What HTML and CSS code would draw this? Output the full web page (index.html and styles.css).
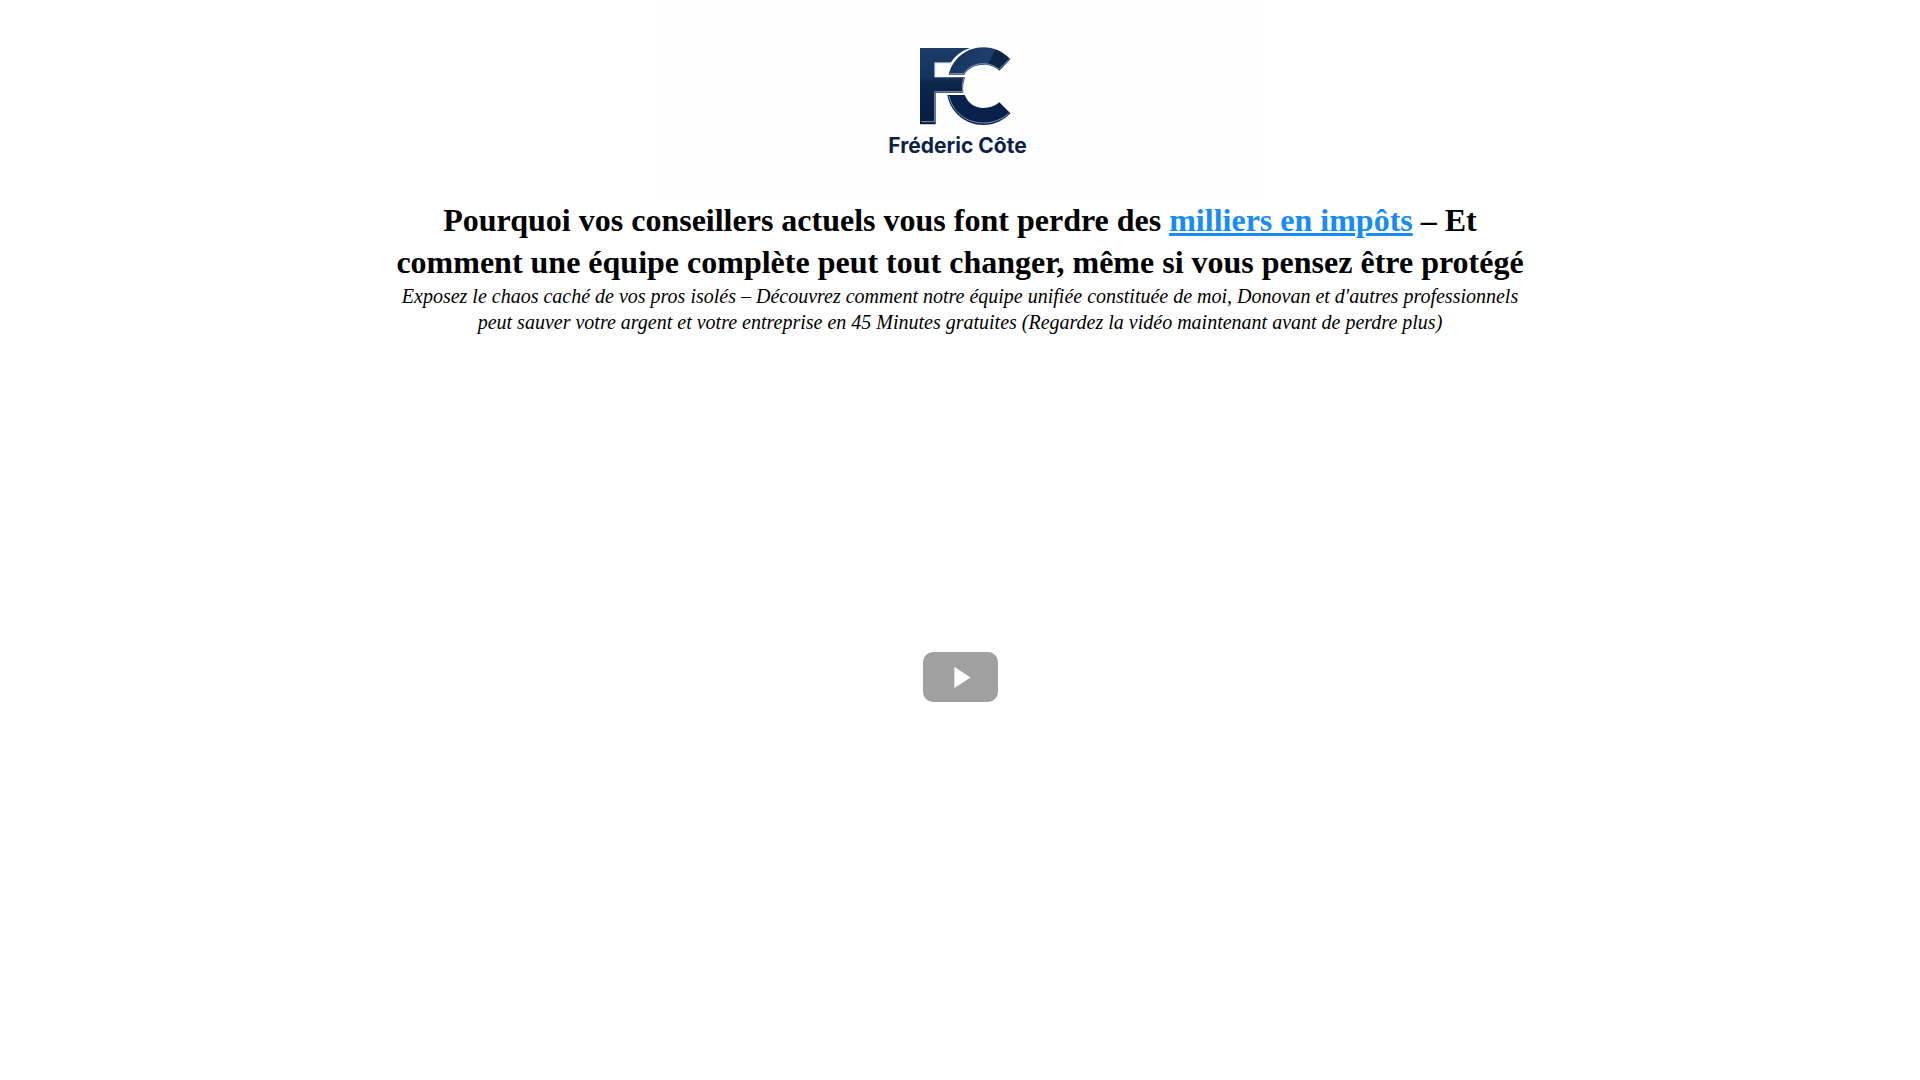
FILE: index.html
```html
<!DOCTYPE html>
<html lang="fr">
<head>
    <meta charset="UTF-8">
    <meta name="viewport" content="width=device-width, initial-scale=1.0">
    <title>Fréderic Côte</title>
    <link rel="stylesheet" href="styles.css">
</head>
<body>
    <header class="logo">
        <svg class="logo-mark" viewBox="147 48 276 240" aria-hidden="true">
            <defs>
                <linearGradient id="navy" x1="0" y1="0" x2="0" y2="1">
                    <stop offset="0" stop-color="#1b3b68"/>
                    <stop offset="0.38" stop-color="#163460"/>
                    <stop offset="0.46" stop-color="#0b2549"/>
                    <stop offset="1" stop-color="#071d40"/>
                </linearGradient>
                <linearGradient id="navyTop" gradientUnits="userSpaceOnUse" x1="240" y1="60" x2="400" y2="140">
                    <stop offset="0" stop-color="#14315b"/>
                    <stop offset="0.66" stop-color="#1f406f"/>
                    <stop offset="0.69" stop-color="#0c2448"/>
                    <stop offset="1" stop-color="#0c2448"/>
                </linearGradient>
            </defs>
            <!-- F -->
            <path fill="url(#navy)" d="M150 54H300Q262 67 243 97H193V142H285Q277 164 280 188H197V283H150Z"/>
            <path class="edge" d="M243 98H194V141M281 143Q274 164 278 185H194V275H154"/>
            <!-- C -->
            <path fill="url(#navyTop)" d="M236 134C248 86 289 52 340 52C371 52 400 65 421 88L388 122C375 109 358 104 340 104C315 104 292 116 283 134Z"/>
            <path fill="#08204a" d="M232 195H284C294 219 314 234 340 234C359 234 375 229 388 217L421 250C400 273 371 285 340 285C287 285 241 247 232 195Z"/>
            <path class="edge" d="M240 131H281C292 112 315 101 340 101C358 101 374 107 387 118L418 87"/>
            <path class="edge" d="M237 198C248 247 290 279 340 279C371 279 396 268 416 250"/>
        </svg>
        <span class="logo-name">Fréderic Côte</span>
    </header>

    <main class="content">
        <h1>Pourquoi vos conseillers actuels vous font perdre des <a href="#video">milliers en impôts</a> – Et comment une équipe complète peut tout changer, même si vous pensez être protégé</h1>
        <p class="subtitle">Exposez le chaos caché de vos pros isolés – Découvrez comment notre équipe unifiée constituée de moi, Donovan et d'autres professionnels peut sauver votre argent et votre entreprise en 45 Minutes gratuites (Regardez la vidéo maintenant avant de perdre plus)</p>

        <div class="video" id="video">
            <button class="play" type="button" aria-label="Lire la vidéo">
                <svg class="play-icon" viewBox="0 0 17 22" aria-hidden="true">
                    <path d="M0 0L17 11L0 22Z"/>
                </svg>
            </button>
        </div>
    </main>
</body>
</html>
```
FILE: styles.css
```css
body {
    margin: 0;
    font-family: "Liberation Serif", "Times New Roman", serif;
    background-color: #fff;
    color: #000;
}
.logo {
    display: flex;
    flex-direction: column;
    align-items: center;
    max-width: 598px;
    margin: 0 auto;
    padding: 46px 0 40px;
    background-color: #fefefe;
}
.logo-mark {
    width: 92px;
    height: 80px;
    margin-left: 10px;
}
.logo-mark .edge {
    fill: none;
    stroke: #7f95b5;
    stroke-width: 3;
}
.logo-name {
    margin-top: 6px;
    margin-right: 5px;
    font-family: Inter, sans-serif;
    font-size: 21px;
    font-weight: 700;
    line-height: 27px;
    color: #0c2248;
}
.content {
    width: 60%;
    margin: 0 auto;
    text-align: center;
}
h1 {
    margin: 0;
    font-size: 32px;
    line-height: 42px;
}
h1 a {
    color: #188bf6;
}
.subtitle {
    margin: 0 0 18px;
    font-size: 20px;
    font-style: italic;
    line-height: 26px;
}
.video {
    display: flex;
    justify-content: center;
    align-items: center;
    aspect-ratio: 16 / 9;
}
.play {
    display: flex;
    justify-content: center;
    align-items: center;
    width: 75px;
    height: 50px;
    padding: 0 0 0 5px;
    border: none;
    border-radius: 10px;
    background-color: #a0a0a0;
    cursor: pointer;
}
.play:hover {
    background-color: #188bf6;
}
.play-icon {
    width: 17px;
    height: 21px;
    fill: #fff;
}
```
